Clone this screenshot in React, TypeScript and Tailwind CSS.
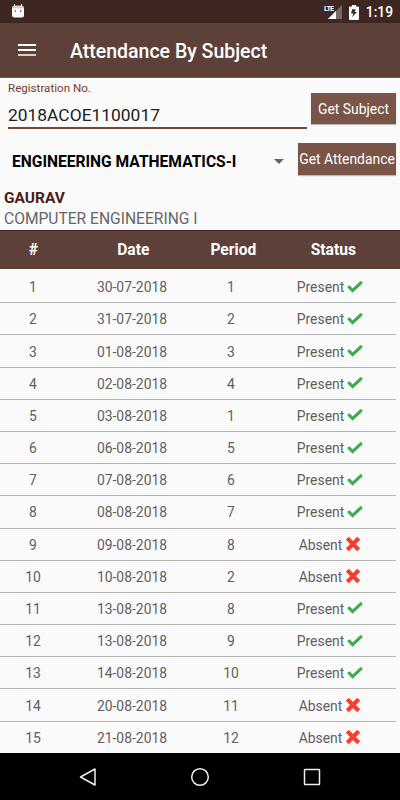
type Row = { date: string; period: number; present: boolean };

const rows: Row[] = [
  { date: "30-07-2018", period: 1, present: true },
  { date: "31-07-2018", period: 2, present: true },
  { date: "01-08-2018", period: 3, present: true },
  { date: "02-08-2018", period: 4, present: true },
  { date: "03-08-2018", period: 1, present: true },
  { date: "06-08-2018", period: 5, present: true },
  { date: "07-08-2018", period: 6, present: true },
  { date: "08-08-2018", period: 7, present: true },
  { date: "09-08-2018", period: 8, present: false },
  { date: "10-08-2018", period: 2, present: false },
  { date: "13-08-2018", period: 8, present: true },
  { date: "13-08-2018", period: 9, present: true },
  { date: "14-08-2018", period: 10, present: true },
  { date: "20-08-2018", period: 11, present: false },
  { date: "21-08-2018", period: 12, present: false },
];

function CheckIcon() {
  return (
    <svg width="16" height="14" viewBox="0 0 16 14" fill="none" className="mb-0.5 shrink-0">
      <path d="M2.2 7.2L5.6 10.6L13.8 2.8" stroke="#3daf49" strokeWidth="3.2" strokeLinecap="round" />
    </svg>
  );
}

function CrossIcon() {
  return (
    <svg width="16" height="16" viewBox="0 0 16 16" fill="none" className="mb-0.5 shrink-0">
      <path d="M2.3 2.3L13.7 13.7M13.7 2.3L2.3 13.7" stroke="#f53e30" strokeWidth="4.2" />
    </svg>
  );
}

function StatusBar() {
  return (
    <div className="flex h-[23px] items-center bg-[#3e2723] pr-[7px] pl-[11px] text-white">
      <svg width="14" height="15" viewBox="0 0 14 15" className="-mt-0.5">
        <path d="M3.5 1V4M10.5 1V4" stroke="#fff" strokeWidth="1" />
        <path d="M1 6.5V5Q1 2.5 3.5 2.5H10.5Q13 2.5 13 5V6.5Z" fill="#d6cfcd" />
        <path d="M1 5.5H13V12Q13 14.5 10.5 14.5H3.5Q1 14.5 1 12Z" fill="#fff" />
        <circle cx="4.3" cy="8" r="0.8" fill="#3e2723" />
        <circle cx="9.7" cy="8" r="0.8" fill="#3e2723" />
      </svg>
      <div className="ml-auto flex items-center">
        <div className="relative mr-[7px] h-[15px] w-[18px]">
          <svg width="18" height="15" viewBox="0 0 18 15">
            <path d="M18 1V15H4Z" fill="#7a6a67" />
            <path d="M12 7V15H4Z" fill="#fff" />
          </svg>
          <span className="absolute top-0 left-0 origin-left scale-x-90 text-[8px] leading-[9px] font-bold tracking-[-0.8px]">
            LTE
          </span>
        </div>
        <svg width="10" height="16" viewBox="0 0 10 16" className="mr-[7px]">
          <path d="M3 1H7V2.5H9Q10 2.5 10 3.5V15Q10 16 9 16H1Q0 16 0 15V3.5Q0 2.5 1 2.5H3Z" fill="#fff" />
          <path d="M6.8 5.2H3.2L2 9.4H4.4L3 13.2L8 8H5.6Z" fill="#3e2723" />
        </svg>
        <span className="text-[13.8px] leading-4 font-medium">1:19</span>
      </div>
    </div>
  );
}

function Toolbar() {
  return (
    <div className="flex h-[55px] items-center border-b border-[#75605a] bg-[#5d4037] pl-[18px]">
      <div className="flex w-[18px] flex-col gap-[3px]">
        <div className="h-0.5 bg-white" />
        <div className="h-0.5 bg-white" />
        <div className="h-0.5 bg-[#d8cfcc]" />
      </div>
      <h1 className="mt-[3px] ml-[34px] text-[19.5px] leading-6 font-medium text-white">Attendance By Subject</h1>
    </div>
  );
}

function LookupForm() {
  return (
    <div className="h-[111px] pr-1 pl-2">
      <div className="flex">
        <div className="h-[51px] w-[299px] border-b-2 border-[#79472b]">
          <div className="pt-[3px] text-[11.6px] leading-[15px] text-[#79392a]">Registration No.</div>
          <div className="pt-2 text-[17.4px] leading-[22px] text-[#212121]">2018ACOE1100017</div>
        </div>
        <button className="mt-[15px] ml-auto h-[31px] w-[85px] bg-[#795548] pt-0.5 text-[13.9px] text-white shadow-[0_1px_1px_rgba(0,0,0,0.25)]">
          Get Subject
        </button>
      </div>
      <div className="mt-[14px] flex h-[31px] items-center">
        <span className="ml-1 pt-[6px] text-[15.6px] leading-5 font-bold text-black">
          ENGINEERING MATHEMATICS-I
        </span>
        <svg width="10" height="5" viewBox="0 0 10 5" className="mt-[5px] mr-[14px] ml-auto">
          <path d="M0 0H10L5 5Z" fill="#666" />
        </svg>
        <button className="h-[32px] w-[98px] bg-[#795548] pt-0.5 text-[13.9px] whitespace-nowrap text-white shadow-[0_1px_1px_rgba(0,0,0,0.25)]">
          Get Attendance
        </button>
      </div>
    </div>
  );
}

function AttendanceTable() {
  return (
    <div>
      <div className="grid h-[39px] grid-cols-[1fr_2fr_1fr_2fr] items-center border-t border-[#4a1a18] bg-[#5d4037] pt-0.5 text-center text-[15.6px] font-bold text-white">
        <span>#</span>
        <span>Date</span>
        <span className="-mx-2">Period</span>
        <span>Status</span>
      </div>
      <div className="h-[484px] pt-0.5 pr-1">
        {rows.map((row, i) => (
          <div
            key={i}
            className="grid h-[32.2px] grid-cols-[1fr_2fr_1fr_2fr] items-center border-b border-[#b5b5b5] pt-0.5 text-center text-[13.9px] text-[#606060]"
          >
            <span>{i + 1}</span>
            <span>{row.date}</span>
            <span>{row.period}</span>
            <span className="flex items-center justify-center gap-[3px]">
              {row.present ? "Present" : "Absent"}
              {row.present ? <CheckIcon /> : <CrossIcon />}
            </span>
          </div>
        ))}
      </div>
    </div>
  );
}

function NavigationBar() {
  return (
    <div className="flex h-[47px] items-center justify-between bg-black px-[79px]">
      <svg width="18" height="20" viewBox="0 0 18 20" fill="none">
        <path d="M16 2V18L1.5 10Z" stroke="#eee" strokeWidth="1.5" strokeLinejoin="round" />
      </svg>
      <svg width="20" height="20" viewBox="0 0 20 20" fill="none">
        <circle cx="10" cy="10" r="8.3" stroke="#eee" strokeWidth="1.5" />
      </svg>
      <svg width="18" height="18" viewBox="0 0 18 18" fill="none">
        <rect x="1.5" y="1.5" width="15" height="15" rx="0.5" stroke="#eee" strokeWidth="1.5" />
      </svg>
    </div>
  );
}

export default function App() {
  return (
    <div className="h-[800px] w-[400px] overflow-hidden bg-[#fafafa] font-['Roboto',sans-serif]">
      <StatusBar />
      <Toolbar />
      <LookupForm />
      <div className="h-[41px] pl-1">
        <div className="text-[15.5px] leading-[19px] font-bold text-[#4e1b18]">GAURAV</div>
        <div className="pt-px text-[15.6px] leading-5 text-[#666]">COMPUTER ENGINEERING I</div>
      </div>
      <AttendanceTable />
      <NavigationBar />
    </div>
  );
}
